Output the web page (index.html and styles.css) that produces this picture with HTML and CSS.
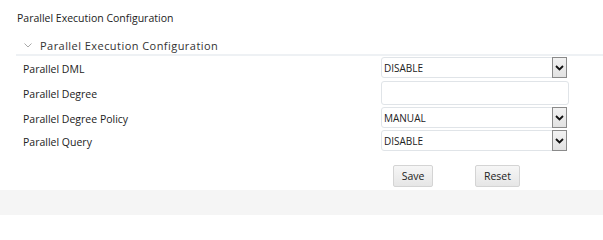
FILE: index.html
```html
<!DOCTYPE html>
<html>
<head>
<meta charset="utf-8">
<link rel="stylesheet" href="styles.css">
</head>
<body>
<div class="page">
  <div class="title">Parallel Execution Configuration</div>
  <div class="section-head">
    <svg class="chev" width="8" height="5" viewBox="0 0 8 5"><path d="M0.5 0.5 L4 4 L7.5 0.5" fill="none" stroke="#a9a9a9" stroke-width="1"/></svg>
    <span>Parallel Execution Configuration</span>
  </div>
  <div class="form">
    <div class="row">
      <div class="label">Parallel DML</div>
      <div class="select"><span class="val">DISABLE</span><span class="arrow"><svg width="9" height="6" viewBox="0 0 9 6"><path d="M1 1 L4.5 4.5 L8 1" fill="none" stroke="#111" stroke-width="1.8"/></svg></span></div>
    </div>
    <div class="row row-input">
      <div class="label">Parallel Degree</div>
      <div class="input"></div>
    </div>
    <div class="row">
      <div class="label">Parallel Degree Policy</div>
      <div class="select"><span class="val">MANUAL</span><span class="arrow"><svg width="9" height="6" viewBox="0 0 9 6"><path d="M1 1 L4.5 4.5 L8 1" fill="none" stroke="#111" stroke-width="1.8"/></svg></span></div>
    </div>
    <div class="row">
      <div class="label">Parallel Query</div>
      <div class="select"><span class="val">DISABLE</span><span class="arrow"><svg width="9" height="6" viewBox="0 0 9 6"><path d="M1 1 L4.5 4.5 L8 1" fill="none" stroke="#111" stroke-width="1.8"/></svg></span></div>
    </div>
  </div>
  <div class="actions">
    <button class="btn btn-save">Save</button>
    <button class="btn btn-reset">Reset</button>
  </div>
</div>
<div class="footer"></div>
</body>
</html>
```
FILE: styles.css
```css
html, body {
  margin: 0;
  padding: 0;
  background: #fff;
  font-family: "Open Sans", "Noto Sans", sans-serif;
  color: #222;
}
.page {
  height: 190px;
  box-sizing: border-box;
  padding-top: 10px;
}
.title {
  font-size: 10.5px;
  line-height: 16px;
  padding-left: 17px;
  color: #222;
}
.section-head {
  margin-top: 11px;
  margin-left: 16px;
  height: 16px;
  border-bottom: 2px solid #eef1f4;
  display: flex;
  align-items: center;
  padding-bottom: 1px;
}
.chev {
  margin-left: 8px;
  margin-right: 8px;
}
.section-head span {
  font-size: 11px;
  letter-spacing: 0.45px;
  color: #333;
}
.form {
  padding-top: 1px;
  padding-left: 23px;
  display: flex;
  flex-direction: column;
  gap: 2px;
}
.row {
  display: flex;
  align-items: center;
  height: 21px;
}
.row-input {
  height: 24px;
  margin-top: 1px;
}
.label {
  width: 358px;
  font-size: 10.5px;
  padding-top: 2px;
  color: #222;
}
.select {
  width: 186px;
  height: 21px;
  box-sizing: border-box;
  border: 1px solid #e0e4e8;
  border-radius: 3px;
  display: flex;
  align-items: center;
  justify-content: space-between;
}
.val {
  font-size: 10px;
  padding-left: 2px;
  color: #222;
}
.arrow {
  width: 15px;
  height: 21px;
  box-sizing: border-box;
  border: 1px solid #8a8a8a;
  background: linear-gradient(#f2f2f2, #e2e2e2);
  display: flex;
  align-items: center;
  justify-content: center;
  margin-right: -1px;
  margin-top: -1px;
  margin-bottom: -1px;
}
.input {
  width: 188px;
  height: 24px;
  box-sizing: border-box;
  border: 1px solid #e0e4e8;
  border-radius: 3px;
}
.actions {
  display: flex;
  padding-left: 393px;
  margin-top: 14px;
  gap: 42px;
}
.btn {
  height: 22px;
  padding: 0;
  font-family: "Open Sans", "Noto Sans", sans-serif;
  font-size: 10.5px;
  color: #222;
  border: 1px solid #d4d4d4;
  border-radius: 2px;
  background: linear-gradient(#f6f6f6, #e6e6e6);
}
.btn-save { width: 40px; }
.btn-reset { width: 45px; }
.footer {
  height: 25px;
  background: #f5f5f5;
}
```
